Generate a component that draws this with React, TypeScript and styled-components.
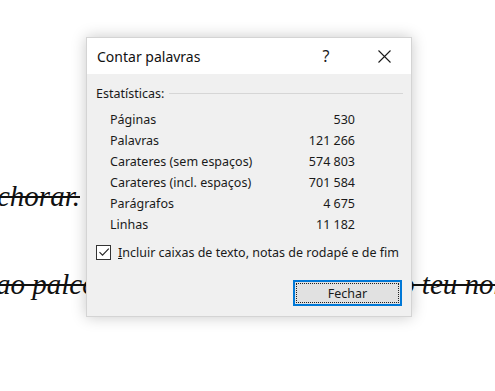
import React from 'react'
import styled, { createGlobalStyle } from 'styled-components'

const GlobalStyle = createGlobalStyle`
  html, body {
    margin: 0;
    padding: 0;
    background: #ffffff;
  }
  body {
    width: 495px;
    height: 391px;
    overflow: hidden;
  }
`

type Stat = {
  label: string
  value: string
}

const stats: Stat[] = [
  { label: 'Páginas', value: '530' },
  { label: 'Palavras', value: '121 266' },
  { label: 'Carateres (sem espaços)', value: '574 803' },
  { label: 'Carateres (incl. espaços)', value: '701 584' },
  { label: 'Parágrafos', value: '4 675' },
  { label: 'Linhas', value: '11 182' },
]

export default function App(): JSX.Element {
  return (
    <>
      <GlobalStyle />
      <Page>
        <DocLine top={177}>
          <DocText left={-3}>chorar.</DocText>
        </DocLine>
        <DocLine top={265}>
          <DocText left={-4}>ao palco</DocText>
          <DocText left={380}>e o teu nome</DocText>
        </DocLine>

        <Dialog>
          <TitleBar>
            <Title>Contar palavras</Title>
            <HelpButton>?</HelpButton>
            <CloseButton>
              <svg width="13" height="13" viewBox="0 0 13 13">
                <path d="M0.5 0.5 L12.5 12.5 M12.5 0.5 L0.5 12.5" stroke="#1a1a1a" strokeWidth="1.1" fill="none" />
              </svg>
            </CloseButton>
          </TitleBar>
          <Body>
            <GroupHeader>
              <span>Estatísticas:</span>
              <Rule />
            </GroupHeader>
            <StatList>
              {stats.map((s) => (
                <StatRow key={s.label}>
                  <span>{s.label}</span>
                  <StatValue>{s.value}</StatValue>
                </StatRow>
              ))}
            </StatList>
            <CheckRow>
              <CheckBox>
                <svg width="12" height="12" viewBox="0 0 12 12">
                  <path d="M1.5 6.2 L4.5 9.2 L10.8 2.6" stroke="#222" strokeWidth="1.1" fill="none" />
                </svg>
              </CheckBox>
              <span>
                <u>I</u>ncluir caixas de texto, notas de rodapé e de fim
              </span>
            </CheckRow>
            <Footer>
              <PrimaryButton>
                <FocusRect>Fechar</FocusRect>
              </PrimaryButton>
            </Footer>
          </Body>
        </Dialog>
      </Page>
    </>
  )
}

const Page = styled.div`
  position: relative;
  width: 495px;
  height: 391px;
  overflow: hidden;
  background: #ffffff;
`

const DocLine = styled.div<{ top: number }>`
  position: absolute;
  left: 0;
  right: 0;
  top: ${(p) => p.top}px;
  height: 38px;
  font-family: 'Liberation Serif', serif;
  font-style: italic;
  font-size: 29px;
  line-height: 38px;
  color: #111;
  white-space: nowrap;
`

const DocText = styled.span<{ left: number }>`
  position: absolute;
  top: 0;
  left: ${(p) => p.left}px;
  text-decoration: line-through;
  text-decoration-thickness: 1.5px;
`

const Dialog = styled.div`
  position: absolute;
  left: 86px;
  top: 37px;
  width: 326px;
  height: 280px;
  display: flex;
  flex-direction: column;
  box-sizing: border-box;
  border: 1px solid #d4d4d4;
  background: #f0f0f0;
  box-shadow: 0 0 14px rgba(0, 0, 0, 0.22);
  font-family: 'Noto Sans', 'Open Sans', sans-serif;
  color: #1a1a1a;
`

const TitleBar = styled.div`
  height: 36px;
  display: flex;
  align-items: center;
  background: #ffffff;
  padding-left: 10px;
`

const Title = styled.div`
  flex: 1;
  font-size: 14px;
  color: #111;
`

const HelpButton = styled.div`
  width: 56px;
  text-align: center;
  font-size: 16px;
  margin-right: 7px;
`

const CloseButton = styled.div`
  width: 46px;
  height: 36px;
  display: flex;
  align-items: center;
  justify-content: center;
  margin-right: 4px;
`

const Body = styled.div`
  flex: 1;
  display: flex;
  flex-direction: column;
  padding: 11px 8px 0 9px;
  font-size: 12.5px;
`

const GroupHeader = styled.div`
  display: flex;
  align-items: center;
  gap: 5px;
  height: 16px;
`

const Rule = styled.div`
  flex: 1;
  height: 1px;
  background: #d6d6d6;
`

const StatList = styled.div`
  display: flex;
  flex-direction: column;
  padding: 8px 0 0 14px;
  width: 245px;
`

const StatRow = styled.div`
  display: flex;
  justify-content: space-between;
  height: 21px;
  line-height: 21px;
`

const StatValue = styled.span`
  text-align: right;
`

const CheckRow = styled.div`
  display: flex;
  align-items: center;
  gap: 7px;
  margin-top: 8px;
  height: 18px;
`

const CheckBox = styled.div`
  width: 13px;
  height: 13px;
  border: 1px solid #333;
  background: #fff;
  display: flex;
  align-items: center;
  justify-content: center;
`

const Footer = styled.div`
  display: flex;
  justify-content: flex-end;
  margin-top: 19px;
  padding-right: 1px;
`

const PrimaryButton = styled.div`
  width: 109px;
  height: 26px;
  box-sizing: border-box;
  border: 2px solid #0078d7;
  background: #e1e1e1;
  padding: 1px;
  display: flex;
`

const FocusRect = styled.div`
  flex: 1;
  border: 1px dotted #222;
  display: flex;
  align-items: center;
  justify-content: center;
  font-size: 12.5px;
`
